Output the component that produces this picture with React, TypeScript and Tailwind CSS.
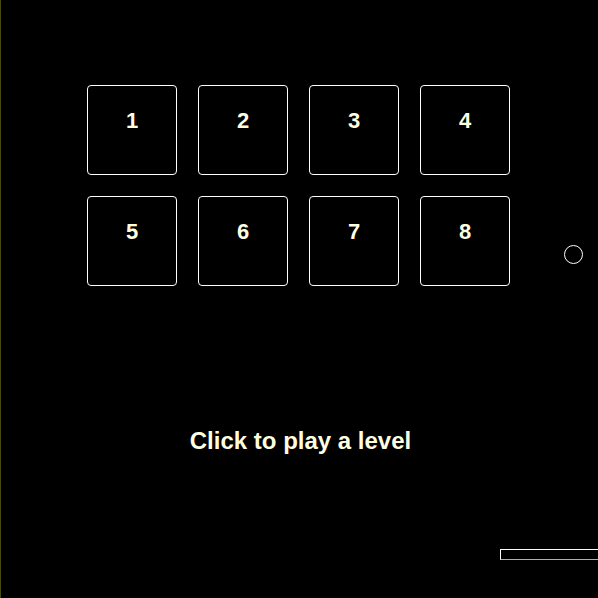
export default function App() {
  const levels = [1, 2, 3, 4, 5, 6, 7, 8];
  return (
    <div
      className="relative w-[598px] h-[598px] bg-black overflow-hidden border-l border-[#4a4a10]"
      style={{ fontFamily: '"Liberation Sans", Arial, sans-serif' }}
    >
      <div className="flex flex-col pl-[86px] pt-[85px]">
        <div className="grid grid-cols-[repeat(4,90px)] gap-[21px]">
          {levels.map((n) => (
            <div
              key={n}
              className="h-[90px] border border-white rounded-[4px] flex justify-center pt-[21px]"
            >
              <span className="text-[22px] font-bold text-[#ffffe0] leading-[28px]">{n}</span>
            </div>
          ))}
        </div>
      </div>
      <div className="mt-[140px] flex justify-center pl-[2px]">
        <span className="text-[24px] font-bold text-[#ffffe0] leading-[30px]">Click to play a level</span>
      </div>
      <div className="absolute left-[563px] top-[245px] w-[19px] h-[19px] rounded-full border border-white" />
      <div className="absolute left-[499px] top-[549px] w-[120px] h-[11px] border border-white border-b-[#b0b0b0]" />
    </div>
  );
}
